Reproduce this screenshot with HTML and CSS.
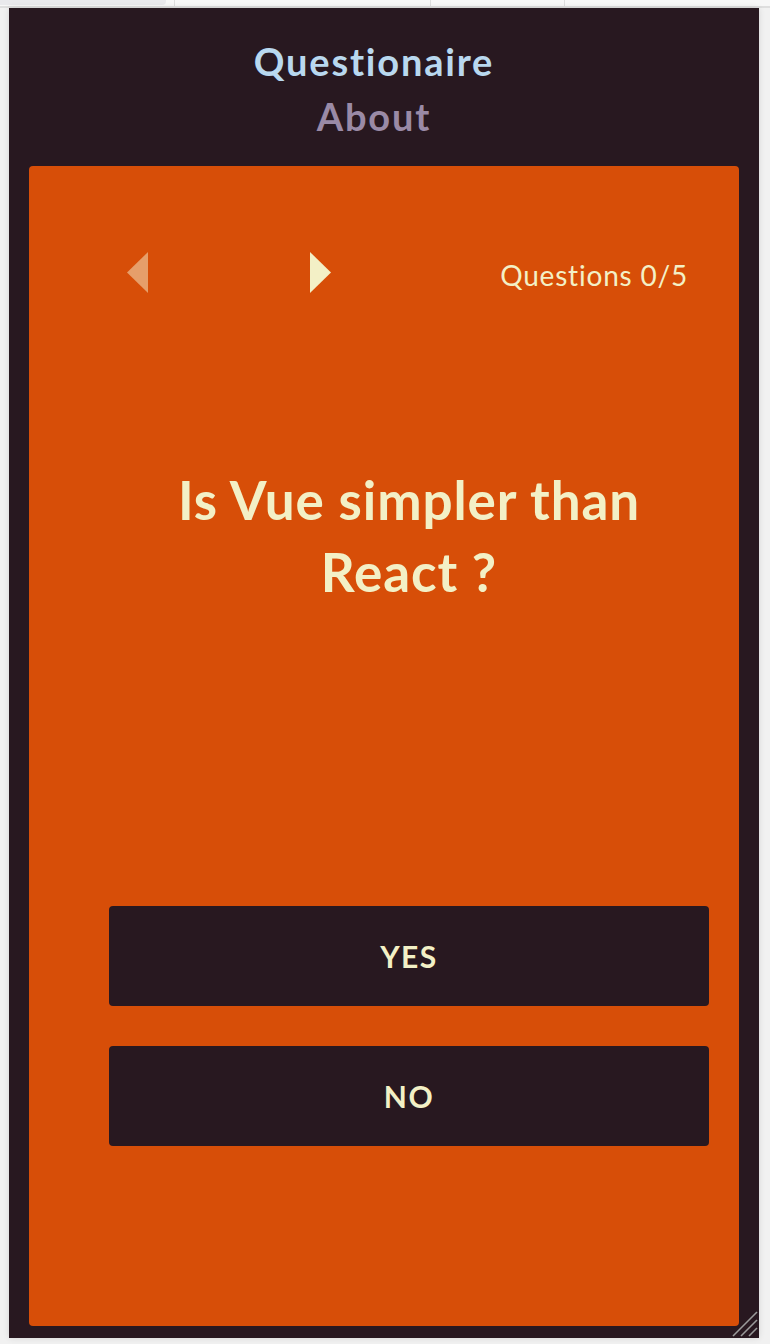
FILE: index.html
```html
<!DOCTYPE html>
<html lang="en">
<head>
<meta charset="utf-8">
<title>Questionaire</title>
<link rel="stylesheet" href="styles.css">
</head>
<body>
<div class="chrome">
  <div class="tab tab-active"></div>
  <div class="tab tab-a"></div>
  <div class="tab tab-b"></div>
  <div class="tab tab-c"></div>
  <div class="tab tab-d"></div>
</div>
<div class="frame">
  <nav class="menu">
    <a class="menu-link menu-active">Questionaire</a>
    <a class="menu-link menu-muted">About</a>
  </nav>
  <main class="card">
    <div class="pager">
      <div class="arrows">
        <svg class="arrow arrow-prev" width="21" height="41" viewBox="0 0 21 41"><polygon points="21,0 21,41 0,20.5" fill="#e69e6a"/></svg>
        <svg class="arrow arrow-next" width="21" height="41" viewBox="0 0 21 41"><polygon points="0,0 0,41 21,20.5" fill="#f3f0c6"/></svg>
      </div>
      <div class="counter">Questions 0/5</div>
    </div>
    <h1 class="question">Is Vue simpler than React ?</h1>
    <div class="answers">
      <button class="answer">YES</button>
      <button class="answer">NO</button>
    </div>
  </main>
  <svg class="resize" width="26" height="26" viewBox="0 0 26 26">
    <line x1="1" y1="25" x2="25" y2="1" stroke="#9a9a9a" stroke-width="1.6"/>
    <line x1="9" y1="25" x2="25" y2="9" stroke="#9a9a9a" stroke-width="1.6"/>
    <line x1="17" y1="25" x2="25" y2="17" stroke="#9a9a9a" stroke-width="1.6"/>
  </svg>
</div>
</body>
</html>
```

FILE: styles.css
```css
* { box-sizing: border-box; }

html, body {
  margin: 0;
  padding: 0;
}

body {
  background: #f1f1f1;
  font-family: "Lato", "Noto Sans", sans-serif;
  width: 770px;
  height: 1344px;
  overflow: hidden;
}

.chrome {
  display: flex;
  height: 8px;
  background: #f7f7f7;
  border-bottom: 2px solid #dedede;
}

.tab {
  height: 6px;
  border-right: 1px solid #dedede;
}

.tab-active {
  width: 166px;
  height: 5px;
  background: #e9e9ec;
  border-right: none;
  border-bottom-right-radius: 4px;
}

.tab-a { width: 9px; }
.tab-b { width: 256px; }
.tab-c { width: 134px; }
.tab-d { flex: 1; border-right: none; }

.frame {
  position: relative;
  margin-left: 9px;
  width: 750px;
  height: 1330px;
  background: #281820;
  box-shadow: 0 0 6px rgba(0, 0, 0, 0.12);
  padding-top: 26px;
}

.menu {
  display: flex;
  flex-direction: column;
  align-items: center;
  padding-right: 20px;
}

.menu-link {
  font-size: 38px;
  font-weight: 700;
  line-height: 55px;
  letter-spacing: 1.8px;
}

.menu-active { color: #b9d8ef; }
.menu-muted { color: #9a8aa6; }

.card {
  margin: 22px 20px 0 20px;
  height: 1160px;
  background: #d74e08;
  border-radius: 4px;
  padding: 86px 30px 0 80px;
}

.pager {
  display: flex;
  align-items: center;
  height: 41px;
}

.arrows {
  display: flex;
  gap: 162px;
  padding-left: 18px;
}

.arrow { display: block; }

.counter {
  margin-left: auto;
  margin-right: 21px;
  color: #f3f0c6;
  font-size: 28px;
  font-weight: 400;
  letter-spacing: 0.8px;
  margin-top: 5px;
}

.question {
  margin: 171px 0 0 0;
  text-align: center;
  color: #f3f0c6;
  font-size: 53px;
  font-weight: 700;
  line-height: 72px;
  letter-spacing: 0.9px;
  padding: 0 30px;
}

.answers {
  display: flex;
  flex-direction: column;
  gap: 40px;
  margin-top: 298px;
}

.answer {
  display: block;
  width: 600px;
  height: 100px;
  border: none;
  border-radius: 4px;
  background: #281820;
  color: #f3f0c6;
  font-family: "Lato", "Noto Sans", sans-serif;
  font-size: 30px;
  font-weight: 700;
  letter-spacing: 1.5px;
  padding: 0;
}

.resize {
  position: absolute;
  right: 1px;
  bottom: 1px;
}
```
